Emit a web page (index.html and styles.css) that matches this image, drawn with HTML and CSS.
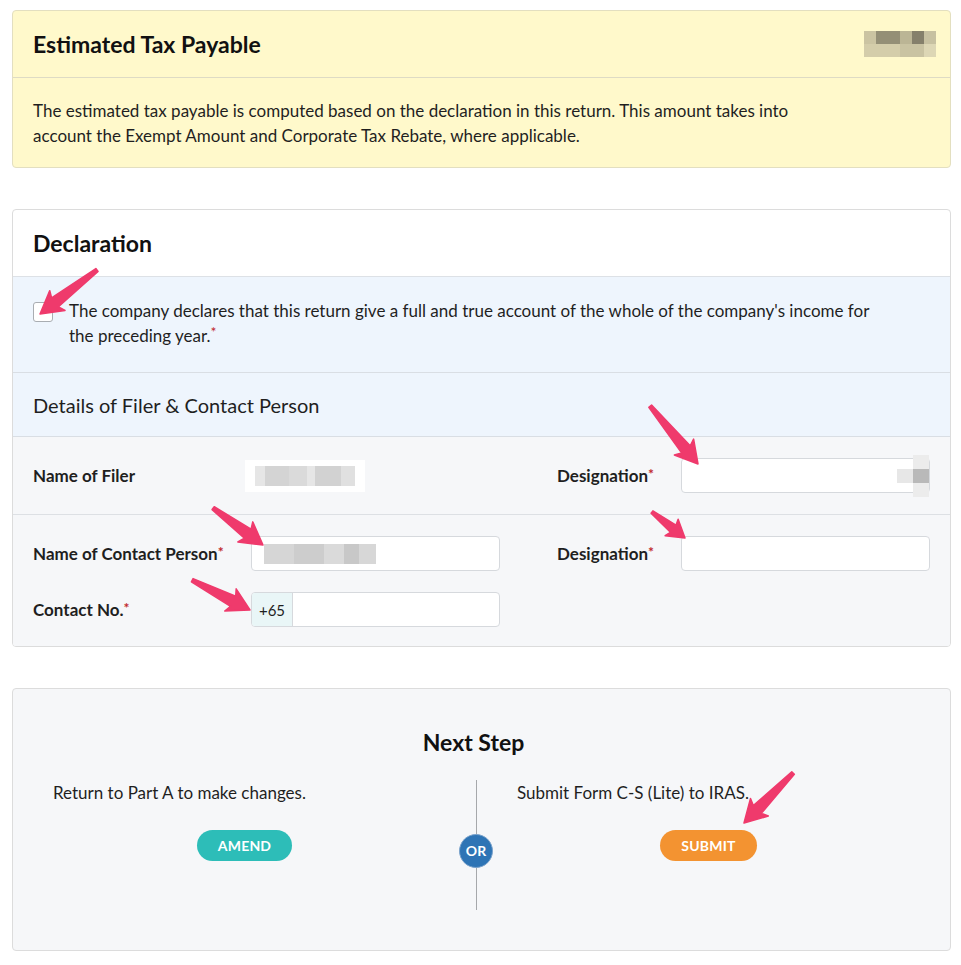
FILE: index.html
```html
<!DOCTYPE html>
<html lang="en">
<head>
<meta charset="utf-8">
<title>Form C-S (Lite) - Declaration</title>
<link rel="stylesheet" href="styles.css">
</head>
<body>
<div class="page">
  <section class="card card-yellow">
    <div class="card-head">
      <h2>Estimated Tax Payable</h2>
      <span class="pix pix-amount"></span>
    </div>
    <div class="card-body">
      <p>The estimated tax payable is computed based on the declaration in this return. This amount takes into<br>account the Exempt Amount and Corporate Tax Rebate, where applicable.</p>
    </div>
  </section>

  <section class="card">
    <div class="card-head white">
      <h2>Declaration</h2>
    </div>
    <div class="declare">
      <span class="checkbox"></span>
      <p>The company declares that this return give a full and true account of the whole of the company's income for<br>the preceding year.<span class="req">*</span></p>
    </div>
    <div class="subhead">Details of Filer &amp; Contact Person</div>
    <div class="row row-first">
      <div class="label">Name of Filer</div>
      <div class="value"><span class="pix pix-filer"></span></div>
      <div></div>
      <div class="label">Designation<span class="req">*</span></div>
      <div class="input input-blur1"><span class="pix pix-desig"></span></div>
    </div>
    <div class="row row-second">
      <div class="label">Name of Contact Person<span class="req">*</span></div>
      <div class="input"><span class="pix pix-contact"></span></div>
      <div></div>
      <div class="label">Designation<span class="req">*</span></div>
      <div class="input"></div>
      <div class="label">Contact No.<span class="req">*</span></div>
      <div class="input phone"><span class="prefix">+65</span></div>
    </div>
  </section>

  <section class="card card-grey next">
    <h2 class="next-title">Next Step</h2>
    <div class="next-grid">
      <div class="opt">
        <p>Return to Part A to make changes.</p>
        <button class="btn btn-amend">AMEND</button>
      </div>
      <div class="divider"><span class="or">OR</span></div>
      <div class="opt">
        <p>Submit Form C-S (Lite) to IRAS.</p>
        <button class="btn btn-submit">SUBMIT</button>
      </div>
    </div>
  </section>
</div>

<svg class="annotations" width="961" height="965" viewBox="0 0 961 965" aria-hidden="true">
  <g fill="#ef3a6c" stroke="#ef3a6c" stroke-width="1.5" stroke-linejoin="round">
    <g transform="translate(40,314) rotate(142.3)"><polygon points="-72,-1.8 -19,-5.6 -22,-12.5 0,0 -22,12.5 -19,5.6 -72,1.8"/></g>
    <g transform="translate(698,464) rotate(50.4)"><polygon points="-75,-1.8 -19,-5.6 -22,-12.5 0,0 -22,12.5 -19,5.6 -75,1.8"/></g>
    <g transform="translate(263,545) rotate(36.5)"><polygon points="-62,-1.8 -19,-5.6 -22,-12.5 0,0 -22,12.5 -19,5.6 -62,1.8"/></g>
    <g transform="translate(685,538) rotate(38.2)"><polygon points="-42,-1.5 -15,-4.5 -17,-10.5 0,0 -17,10.5 -15,4.5 -42,1.5"/></g>
    <g transform="translate(250,610) rotate(27.3)"><polygon points="-65,-1.8 -19,-5.6 -22,-12.5 0,0 -22,12.5 -19,5.6 -65,1.8"/></g>
    <g transform="translate(744,823) rotate(134.5)"><polygon points="-70,-1.8 -19,-5.6 -22,-12.5 0,0 -22,12.5 -19,5.6 -70,1.8"/></g>
  </g>
</svg>
</body>
</html>
```

FILE: styles.css
```css
* { box-sizing: border-box; }

html, body {
  margin: 0;
  padding: 0;
  background: #ffffff;
}

body {
  font-family: Lato, "Noto Sans", "Liberation Sans", sans-serif;
  color: #1f1f1f;
  font-size: 17px;
  position: relative;
}

.page {
  padding: 10px 10px 14px 12px;
  display: flex;
  flex-direction: column;
  gap: 41px;
}

h2 {
  margin: 0;
  font-size: 23px;
  font-weight: 700;
  color: #111;
}

p { margin: 0; }

.card {
  border: 1px solid #dcdcdc;
  border-radius: 4px;
  background: #fff;
  overflow: hidden;
}

.card-yellow {
  background: #fff9cb;
  border-color: #e3dfc0;
}

.card-grey {
  background: #f6f7f9;
}

.card-head {
  height: 67px;
  padding: 0 14px 0 20px;
  display: flex;
  align-items: center;
  justify-content: space-between;
  border-bottom: 1px solid #dedbc4;
}

.card-head.white {
  border-bottom-color: #dde1e6;
}

.card-body {
  padding: 20px 20px 19px;
  line-height: 25px;
}

/* pixelated (blurred) values */
.pix {
  display: inline-block;
}

.pix-amount {
  width: 84px;
  height: 26px;
  background:
    linear-gradient(to right, transparent 0 12px, #c9c2a0 12px 24px, #8f8a72 24px 48px, #b8b293 48px 60px, #7f7a66 60px 72px, #c5bf9f 72px 84px) top / 100% 13px no-repeat,
    linear-gradient(to right, transparent 0 12px, #d2cba9 12px 48px, #c7c1a0 48px 72px, #dcd6b4 72px 84px) bottom / 100% 13px no-repeat;
  opacity: 0.95;
}

.pix-filer {
  width: 120px;
  height: 32px;
  background:
    linear-gradient(to right, #ffffff 0 10px, #e6e6e6 10px 20px, #d4d4d4 20px 44px, #dadada 44px 62px, #e6e6e6 62px 70px, #d2d2d2 70px 96px, #e0e0e0 96px 110px, #ffffff 110px) center / 100% 20px no-repeat,
    #ffffff;
}

.input .pix-contact {
  position: absolute;
  left: 12px;
  top: 4px;
  width: 196px;
  height: 26px;
  background:
    linear-gradient(to right, #d6d6d6 0 30px, #cdcdcd 30px 60px, #dadada 60px 80px, #c8c8c8 80px 95px, #d7d7d7 95px 112px, #ffffff 112px) center / 100% 20px no-repeat;
}

.input .pix-desig {
  position: absolute;
  right: -2px;
  top: -4px;
  width: 34px;
  height: 42px;
  background:
    linear-gradient(to right, #e7e7e7 0 16px, #b9b9b9 16px 32px, transparent 32px) center / 100% 14px no-repeat,
    linear-gradient(to right, transparent 0 16px, #ececec 16px 32px, transparent 32px);
}

/* Declaration */
.declare {
  background: #eef5fd;
  padding: 21px 20px 24px;
  display: flex;
  align-items: flex-start;
  gap: 16px;
  line-height: 25px;
  border-bottom: 1px solid #d9dee4;
}

.checkbox {
  flex: none;
  width: 20px;
  height: 20px;
  margin-top: 4px;
  border: 1px solid #a9adb2;
  border-radius: 3px;
  background: #fff;
}

.req {
  color: #c0272d;
  font-size: 14px;
  vertical-align: top;
  line-height: 1;
  position: relative;
  top: 2px;
}

.subhead {
  background: #eef5fd;
  height: 64px;
  padding: 0 20px;
  display: flex;
  align-items: center;
  font-size: 20px;
  border-bottom: 1px solid #d9dee4;
}

/* rows */
.row {
  background: #f6f7f9;
  display: grid;
  grid-template-columns: 218px 249px 57px 124px 249px;
  align-items: center;
  padding: 21px 20px 21px 20px;
  row-gap: 21px;
}

.row-first {
  border-bottom: 1px solid #dde0e4;
  padding-bottom: 21px;
}

.row-second {
  padding-bottom: 19px;
}

.label {
  font-weight: 700;
  font-size: 17px;
  white-space: nowrap;
}

.value {
  display: flex;
  align-items: center;
  margin-left: -6px;
}

.input {
  position: relative;
  height: 35px;
  background: #fff;
  border: 1px solid #d6d9dd;
  border-radius: 4px;
}

.phone {
  display: flex;
  overflow: hidden;
}

.prefix {
  width: 41px;
  height: 100%;
  background: #e9f6f7;
  border-right: 1px solid #d6d9dd;
  display: flex;
  align-items: center;
  justify-content: center;
  font-size: 15px;
}

/* Next step */
.next {
  padding: 38px 50px 40px 40px;
}

.next-title {
  text-align: center;
  line-height: 30px;
  margin-bottom: 23px;
  padding-right: 6px;
}

.next-grid {
  display: grid;
  grid-template-columns: 1fr 81px 1fr;
  height: 130px;
}

.opt {
  display: flex;
  flex-direction: column;
  line-height: 25px;
}

.opt p {
  margin-bottom: 25px;
}

.btn {
  align-self: center;
  height: 31px;
  padding: 0 21px;
  border: none;
  border-radius: 16px;
  color: #fff;
  font-family: inherit;
  font-size: 14px;
  font-weight: 700;
  letter-spacing: 0.2px;
}

.btn-amend { background: #2dbdb8; }
.btn-submit { background: #f39331; }

.divider {
  position: relative;
  display: flex;
  align-items: center;
  justify-content: center;
}

.divider::before {
  content: "";
  position: absolute;
  top: 0;
  bottom: 0;
  left: 40px;
  width: 1px;
  background: #a6a8ab;
}

.or {
  position: relative;
  width: 34px;
  height: 34px;
  border-radius: 50%;
  background: #2e74b5;
  border: 1px solid #7ba3cc;
  color: #fff;
  font-size: 14px;
  font-weight: 700;
  display: flex;
  align-items: center;
  justify-content: center;
  margin-top: 11px;
  margin-right: 1px;
}

.annotations {
  position: absolute;
  left: 0;
  top: 0;
  pointer-events: none;
}
```
